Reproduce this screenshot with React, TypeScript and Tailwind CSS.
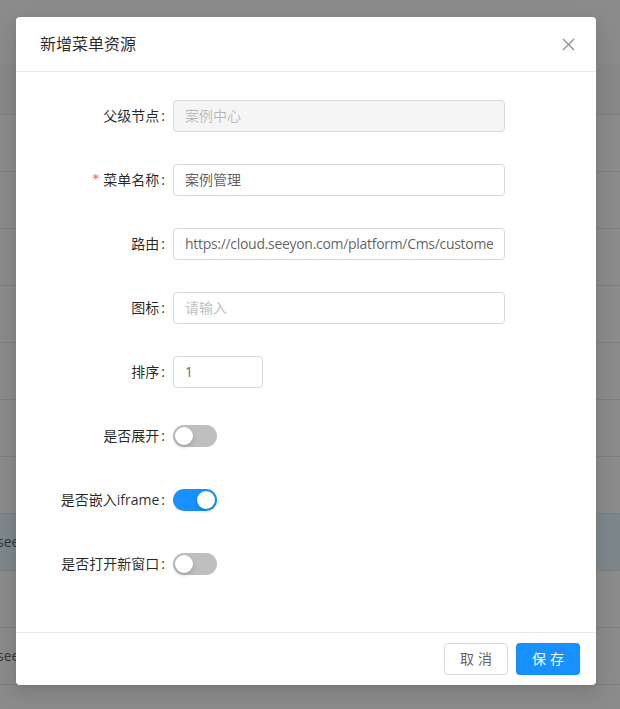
import React from "react";

const font = { fontFamily: '"Open Sans", "Noto Sans CJK SC", sans-serif' };

function Label({ text, required }: { text: string; required?: boolean }) {
  return (
    <div className="w-[133px] shrink-0 flex items-center justify-end text-sm text-black/85 whitespace-nowrap">
      {required && <span className="text-[#ff4d4f] mr-1 text-sm leading-none" style={{ fontFamily: '"Liberation Serif", serif' }}>*</span>}
      <span>{text}</span>
      <span className="ml-[2px] mr-2">:</span>
    </div>
  );
}

function TextBox({ value, placeholder, disabled, width = "w-[332px]", tight }: { value?: string; placeholder?: string; disabled?: boolean; width?: string; tight?: boolean }) {
  return (
    <div
      className={`${width} h-8 rounded border border-[#d9d9d9] px-[11px] flex items-center text-sm ${
        disabled ? "bg-[#f5f5f5] text-black/25" : "bg-white text-black/65"
      }`}
    >
      <span className={`block w-full overflow-hidden whitespace-nowrap ${tight ? "tracking-[-0.3px]" : ""}`}>
        {value ? value : <span className="text-[#bfbfbf]">{placeholder}</span>}
      </span>
    </div>
  );
}

function Toggle({ on }: { on?: boolean }) {
  return (
    <div className={`relative w-11 h-[22px] rounded-full ${on ? "bg-[#1890ff]" : "bg-[#bfbfbf]"}`}>
      <div
        className={`absolute top-[2px] w-[18px] h-[18px] rounded-full bg-white shadow-[0_2px_4px_rgba(0,35,11,0.2)] ${
          on ? "left-[24px]" : "left-[2px]"
        }`}
      />
    </div>
  );
}

function Row({ children }: { children: React.ReactNode }) {
  return <div className="flex items-center h-8">{children}</div>;
}

function BackgroundPage() {
  const rows = Array.from({ length: 11 }, (_, i) => i);
  return (
    <div className="w-[620px] h-[709px] overflow-hidden bg-white">
      <div className="h-16 bg-white" />
      <div className="h-[51px] bg-[#fafafa] border-b border-[#e8e8e8]" />
      {rows.map((i) => (
        <div
          key={i}
          className={`h-[57px] border-b border-[#e8e8e8] flex items-center text-sm text-black/65 ${i === 7 ? "bg-[#e6f7ff]" : ""} ${i === 10 ? "pt-[6px]" : ""}`}
        >
          {(i === 7 || i === 9) && <span className="ml-[-3px] whitespace-nowrap">seeyon.com/platform</span>}
          {i === 10 && (
            <>
              <span className="ml-[72px] w-[388px] whitespace-nowrap">案例管理　系统 中心</span>
              <span className="whitespace-nowrap">2021-03-12 18:05:33</span>
            </>
          )}
        </div>
      ))}
    </div>
  );
}

export default function App() {
  return (
    <div className="relative w-[620px] h-[709px] overflow-hidden" style={font}>
      <BackgroundPage />
      <div className="absolute inset-0 bg-black/45" />

      <div className="absolute left-4 top-[17px] w-[580px] bg-white rounded shadow-[0_3px_6px_-4px_rgba(0,0,0,0.12),0_6px_16px_0_rgba(0,0,0,0.08),0_9px_28px_8px_rgba(0,0,0,0.05)]">
        <div className="relative h-[55px] px-6 flex items-center border-b border-[#e8e8e8]">
          <span className="text-base text-black/85">新增菜单资源</span>
          <div className="absolute right-0 top-0 w-14 h-[55px] flex items-center justify-center">
            <svg width="13" height="13" viewBox="0 0 13 13" fill="none" stroke="rgba(0,0,0,0.45)" strokeWidth="1.3">
              <path d="M1 1 L12 12 M12 1 L1 12" />
            </svg>
          </div>
        </div>

        <div className="px-6 pt-7 pb-[52px] flex flex-col gap-8">
          <Row>
            <Label text="父级节点" />
            <TextBox value="案例中心" disabled />
          </Row>
          <Row>
            <Label text="菜单名称" required />
            <TextBox value="案例管理" />
          </Row>
          <Row>
            <Label text="路由" />
            <TextBox value="https://cloud.seeyon.com/platform/Cms/customerCase" tight />
          </Row>
          <Row>
            <Label text="图标" />
            <TextBox placeholder="请输入" />
          </Row>
          <Row>
            <Label text="排序" />
            <TextBox value="1" width="w-[90px]" />
          </Row>
          <Row>
            <Label text="是否展开" />
            <Toggle />
          </Row>
          <Row>
            <Label text="是否嵌入iframe" />
            <Toggle on />
          </Row>
          <Row>
            <Label text="是否打开新窗口" />
            <Toggle />
          </Row>
        </div>

        <div className="h-[53px] border-t border-[#e8e8e8] px-4 flex items-center justify-end gap-2">
          <button className="w-16 h-8 rounded border border-[#d9d9d9] bg-white text-sm text-black/65 tracking-[4px] pl-[4px]">
            取消
          </button>
          <button className="w-16 h-8 rounded bg-[#1890ff] text-sm text-white tracking-[4px] pl-[4px]">
            保存
          </button>
        </div>
      </div>
    </div>
  );
}
